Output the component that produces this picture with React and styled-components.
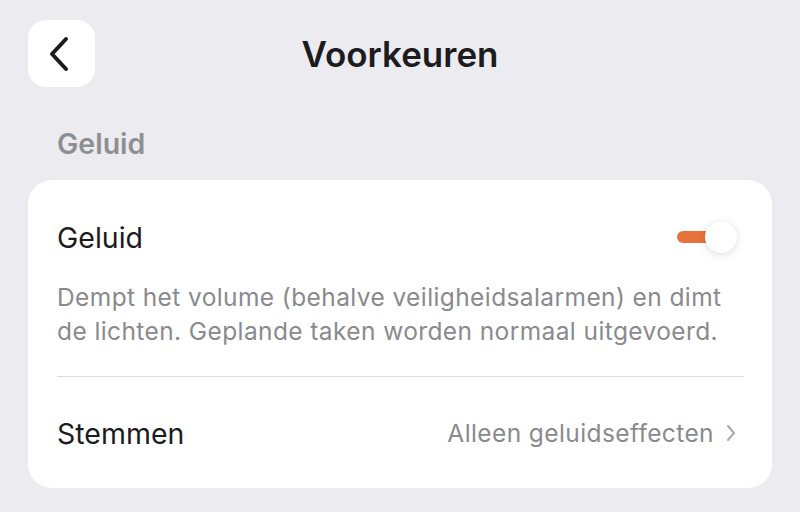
import React, { useState } from "react";
import styled, { createGlobalStyle } from "styled-components";

const GlobalStyle = createGlobalStyle`
  html, body {
    margin: 0;
    padding: 0;
    background: #ebebf0;
  }
  body {
    font-family: Inter, "Noto Sans", sans-serif;
    -webkit-font-smoothing: antialiased;
  }
`;

const Page = styled.div`
  width: 800px;
  height: 512px;
  box-sizing: border-box;
  padding: 20px 28px 0;
  background: #ebebf0;
  overflow: hidden;
`;

const Header = styled.header`
  display: grid;
  grid-template-columns: 67px 1fr 67px;
  align-items: center;
  height: 67px;
`;

const BackButton = styled.button`
  width: 67px;
  height: 67px;
  border: none;
  border-radius: 18px;
  background: #ffffff;
  display: flex;
  align-items: center;
  justify-content: center;
  padding: 0 6px 0 0;
  cursor: pointer;
`;

const Title = styled.h1`
  margin: 0;
  text-align: center;
  font-size: 35px;
  font-weight: 600;
  color: #1c1c1e;
`;

const SectionLabel = styled.h2`
  margin: 42px 0 0 29px;
  height: 30px;
  line-height: 30px;
  font-size: 28.5px;
  font-weight: 600;
  color: #8e8e93;
`;

const Card = styled.section`
  margin-top: 21px;
  background: #ffffff;
  border-radius: 24px;
  padding: 29px 28px 0 29px;
  height: 308px;
  box-sizing: border-box;
`;

const Row = styled.div`
  display: flex;
  align-items: center;
  justify-content: space-between;
  height: ${(p) => p.$height || 56}px;
`;

const Label = styled.span`
  font-size: 28.5px;
  font-weight: 400;
  color: #1c1c1e;
`;

const Description = styled.p`
  margin: 15px 0 0;
  font-size: 24.5px;
  line-height: 34px;
  letter-spacing: 0.4px;
  color: #8a8a8e;
`;

const Divider = styled.hr`
  margin: 28px 0 0;
  border: none;
  height: 1px;
  background: #dcdcdf;
`;

const Value = styled.span`
  display: flex;
  align-items: center;
  gap: 12px;
  margin-right: 8px;
  font-size: 24.5px;
  letter-spacing: 0.4px;
  color: #8a8a8e;
`;

const Toggle = styled.button`
  position: relative;
  width: 62px;
  height: 34px;
  margin-right: 6px;
  border: none;
  background: transparent;
  padding: 0;
  cursor: pointer;
`;

const Track = styled.span`
  position: absolute;
  left: 1px;
  top: 11px;
  width: 42px;
  height: 12px;
  border-radius: 6px;
  background: ${(p) => (p.$on ? "#e8733a" : "#d1d1d6")};
`;

const Knob = styled.span`
  position: absolute;
  top: 1px;
  left: ${(p) => (p.$on ? 29 : 0)}px;
  width: 32px;
  height: 32px;
  border-radius: 50%;
  background: #ffffff;
  box-shadow: 0 2px 10px rgba(0, 0, 0, 0.12), 0 0 2px rgba(0, 0, 0, 0.06);
`;

const BackIcon = () => (
  <svg width="24" height="36" viewBox="0 0 24 36" fill="none">
    <path
      d="M19 3 L5 18 L19 33"
      stroke="#1c1c1e"
      strokeWidth="4"
      strokeLinecap="round"
      strokeLinejoin="round"
    />
  </svg>
);

const Chevron = () => (
  <svg width="10" height="18" viewBox="0 0 10 18" fill="none">
    <path
      d="M2 2 L8 9 L2 16"
      stroke="#a8a8ad"
      strokeWidth="2"
      strokeLinecap="round"
      strokeLinejoin="round"
    />
  </svg>
);

export default function App() {
  const [sound, setSound] = useState(true);

  return (
    <Page>
      <GlobalStyle />
      <Header>
        <BackButton aria-label="Terug">
          <BackIcon />
        </BackButton>
        <Title>Voorkeuren</Title>
        <span />
      </Header>

      <SectionLabel>Geluid</SectionLabel>

      <Card>
        <Row>
          <Label>Geluid</Label>
          <Toggle onClick={() => setSound(!sound)} aria-pressed={sound}>
            <Track $on={sound} />
            <Knob $on={sound} />
          </Toggle>
        </Row>
        <Description>
          Dempt het volume (behalve veiligheidsalarmen) en dimt
          <br />
          de lichten. Geplande taken worden normaal uitgevoerd.
        </Description>
        <Divider />
        <Row $height={112}>
          <Label>Stemmen</Label>
          <Value>
            Alleen geluidseffecten
            <Chevron />
          </Value>
        </Row>
      </Card>
    </Page>
  );
}
